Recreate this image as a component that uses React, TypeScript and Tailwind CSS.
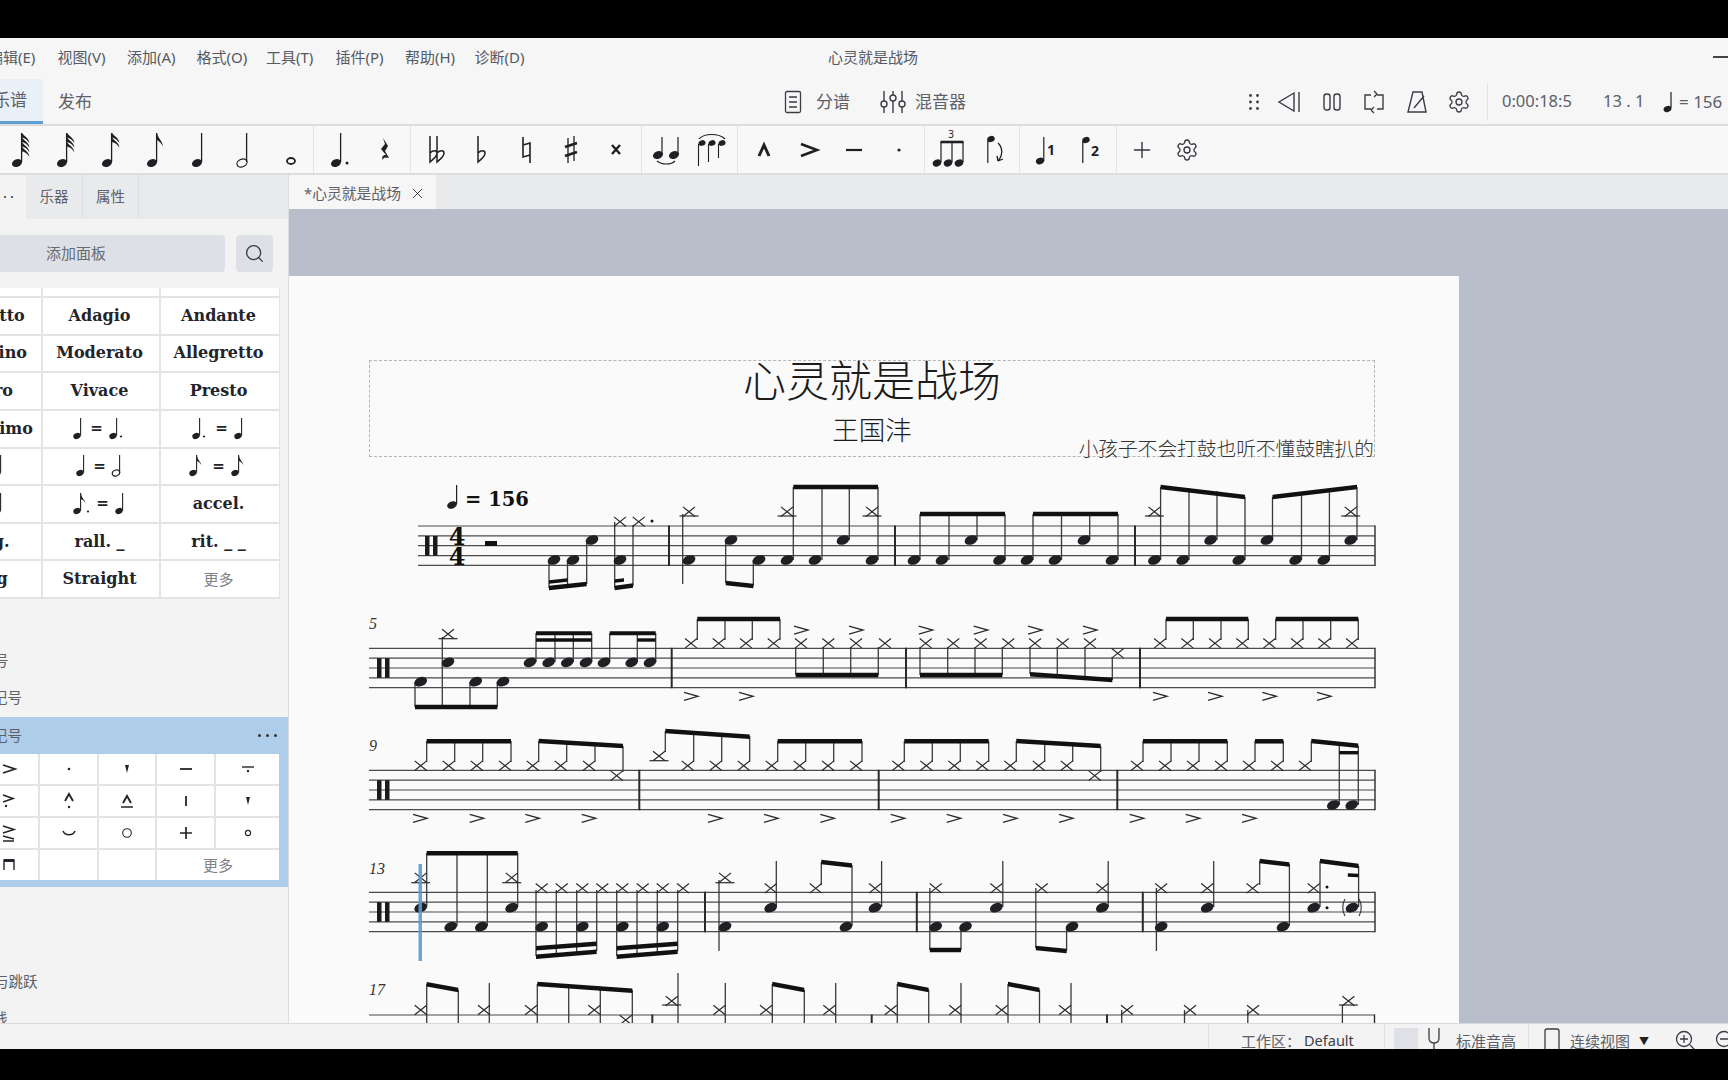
import type { ReactNode } from 'react'
import { Search, Settings, Plus, X } from 'lucide-react'

type Pt = [number, number]
type Beam = [number, number, number, number, number?]

const row = (xs: number[], y: number): Pt[] => xs.map((x) => [x, y])

/* ---------- small note drawings for toolbars and palettes ---------- */

function Head({ x, y, rx = 5.2, ry = 3.8, open = false }: { x: number; y: number; rx?: number; ry?: number; open?: boolean }) {
  return (
    <ellipse
      cx={x}
      cy={y}
      rx={rx}
      ry={ry}
      transform={`rotate(-22 ${x} ${y})`}
      fill={open ? 'none' : '#1f2024'}
      stroke={open ? '#1f2024' : 'none'}
      strokeWidth={open ? 1.2 : 0}
    />
  )
}

function NoteIcon({ flags = 0, open = false, dot = false }: { flags?: number; open?: boolean; dot?: boolean }) {
  return (
    <svg width="30" height="40" viewBox="0 0 30 40">
      <Head x={11} y={33} open={open} />
      <line x1="15.6" y1="3" x2="15.6" y2="32" stroke="#1f2024" strokeWidth="1.3" />
      {flags === 1 && <path d="M16 3c1 6 7 8 6 17c1-5-3-8-6-10z" fill="#1f2024" />}
      {flags > 1 &&
        Array.from({ length: flags }).map((_, i) => (
          <path key={i} d={`M16 ${3 + i * 4.6}c2 3 7 5 7.4 10c-2-3.5-4.6-4.6-7.4-5.6z`} fill="#1f2024" />
        ))}
      {dot && <circle cx="22" cy="33" r="1.5" fill="#1f2024" />}
    </svg>
  )
}

function Ico({ children, w = 30 }: { children: ReactNode; w?: number }) {
  return (
    <svg width={w} height="40" viewBox={`0 0 ${w} 40`} fill="none" stroke="#1f2024">
      {children}
    </svg>
  )
}

function Group({ w, children, last }: { w: string; children: ReactNode; last?: boolean }) {
  return (
    <div className={`flex h-full flex-none items-center justify-center ${w} ${last ? '' : 'border-r border-[#e4e4e5]'}`}>
      {children}
    </div>
  )
}

function Btn({ children }: { children: ReactNode }) {
  return <div className="flex h-full w-[45px] flex-none items-center justify-center">{children}</div>
}

function Toolbar() {
  return (
    <div className="flex h-[51px] flex-none border-y-2 border-[#dddddf] bg-[#f8f8f9]">
      <div className="-ml-[2px] flex h-full">
        <Group w="w-[316px]">
          <Btn><NoteIcon flags={4} /></Btn>
          <Btn><NoteIcon flags={3} /></Btn>
          <Btn><NoteIcon flags={2} /></Btn>
          <Btn><NoteIcon flags={1} /></Btn>
          <Btn><NoteIcon /></Btn>
          <Btn><NoteIcon open /></Btn>
          <Btn>
            <Ico>
              <ellipse cx="15" cy="31" rx="4" ry="3" strokeWidth="1.8" />
            </Ico>
          </Btn>
        </Group>
        <Group w="w-[97px]">
          <Btn><NoteIcon dot /></Btn>
          <Btn>
            <Ico>
              <path d="M13 8l5 8-3 5 4 7c-3-1-6-1-6 2-2-3 0-5 3-5l-5-6 4-5z" fill="#1f2024" stroke="none" />
            </Ico>
          </Btn>
        </Group>
        <Group w="w-[231px]">
          <Btn>
            <Ico>
              <path d="M9 6v26c3-3 7-5 7-9 0-3-4-3-7 0M16 6v26c3-3 7-5 7-9 0-3-4-3-7 0" strokeWidth="1.5" />
            </Ico>
          </Btn>
          <Btn>
            <Ico>
              <path d="M12 6v26c3-3 7-5 7-9 0-3-4-3-7 0" strokeWidth="1.5" />
            </Ico>
          </Btn>
          <Btn>
            <Ico>
              <path d="M12 7v20l7-2M19 33V13l-7 2" strokeWidth="1.6" />
            </Ico>
          </Btn>
          <Btn>
            <Ico>
              <path d="M12 8v25M18 6v25" strokeWidth="1.3" />
              <path d="M9 17l12-4M9 26l12-4" strokeWidth="2.6" />
            </Ico>
          </Btn>
          <Btn>
            <Ico>
              <path d="M11 15l8 9M19 15l-8 9" strokeWidth="2.4" />
            </Ico>
          </Btn>
        </Group>
        <Group w="w-[96px]">
          <Btn>
            <Ico w={36}>
              <Head x={9} y={25} />
              <Head x={25} y={25} />
              <path d="M13 7v18M29 7v18" strokeWidth="1.2" />
              <path d="M8 31c5 4 14 4 18 0" strokeWidth="1.1" />
            </Ico>
          </Btn>
          <Btn>
            <Ico w={36}>
              <Head x={8} y={13} rx={3.6} ry={2.8} />
              <Head x={18} y={13} rx={3.6} ry={2.8} />
              <Head x={28} y={13} rx={3.6} ry={2.8} />
              <path d="M4.5 14v22M14.5 14v18M24.5 14v14" strokeWidth="1.1" />
              <path d="M5 9c5-6 20-6 26 0" strokeWidth="1.1" />
            </Ico>
          </Btn>
        </Group>
        <Group w="w-[187px]">
          <Btn>
            <Ico>
              <path d="M10 26l5-11 5 11" strokeWidth="3" />
            </Ico>
          </Btn>
          <Btn>
            <Ico>
              <path d="M7 14l16 6-16 6" strokeWidth="2.6" />
            </Ico>
          </Btn>
          <Btn>
            <Ico>
              <path d="M7 20h16" strokeWidth="2.2" />
            </Ico>
          </Btn>
          <Btn>
            <Ico>
              <circle cx="15" cy="20" r="1.6" fill="#1f2024" stroke="none" />
            </Ico>
          </Btn>
        </Group>
        <Group w="w-[95px]">
          <Btn>
            <Ico w={36}>
              <text x="19" y="8" fontSize="10" textAnchor="middle" fill="#1f2024" stroke="none">3</text>
              <Head x={5} y={33} rx={4.4} ry={3.4} />
              <Head x={16} y={33} rx={4.4} ry={3.4} />
              <Head x={27} y={33} rx={4.4} ry={3.4} />
              <path d="M9 12v20M20 12v20M31 12v20" strokeWidth="1.2" />
              <path d="M8.5 12h23" strokeWidth="2.6" />
            </Ico>
          </Btn>
          <Btn>
            <Ico>
              <Head x={11} y={9} rx={3.8} ry={3} />
              <path d="M7.8 10v23" strokeWidth="1.2" />
              <path d="M18 13c5 5 5 12 0 18M18 31l-1-5M18 31l5-2" strokeWidth="1.3" />
            </Ico>
          </Btn>
        </Group>
        <Group w="w-[97px]">
          <Btn>
            <Ico>
              <Head x={9} y={31} rx={4.2} ry={3.2} />
              <path d="M12.8 7v24" strokeWidth="1.2" />
              <text x="20" y="25" fontSize="14" fontWeight="700" textAnchor="middle" fill="#1f2024" stroke="none">1</text>
            </Ico>
          </Btn>
          <Btn>
            <Ico>
              <Head x={10} y={10} rx={3.8} ry={3} />
              <path d="M6.8 11v22" strokeWidth="1.2" />
              <text x="19" y="26" fontSize="14" fontWeight="700" textAnchor="middle" fill="#1f2024" stroke="none">2</text>
            </Ico>
          </Btn>
        </Group>
        <Group w="w-[94px]" last>
          <Btn><Plus size={26} strokeWidth={1.3} className="text-[#33363d]" /></Btn>
          <Btn><Settings size={24} strokeWidth={1.3} className="text-[#33363d]" /></Btn>
        </Group>
      </div>
    </div>
  )
}

function TopRow() {
  return (
    <div className="flex h-[45px] flex-none items-center bg-[#f6f6f7] text-[17px] text-[#5c6068]">
      <div className="flex h-full w-[43px] flex-none items-center justify-end overflow-hidden border-b-[3px] border-[#5f9fd3] bg-[#e9f0f7] pr-[16px]">
        <span className="flex-none">乐谱</span>
      </div>
      <span className="ml-[15px] w-[34px] flex-none whitespace-nowrap">发布</span>

      <svg className="ml-[692px] flex-none" width="18" height="24" viewBox="0 0 18 24" fill="none" stroke="#3a3d44" strokeWidth="1.3">
        <rect x="1.5" y="1.5" width="15" height="21" rx="1.5" />
        <path d="M5 7h8M5 12h8M5 17h8" />
      </svg>
      <span className="ml-[14px] w-[34px] flex-none whitespace-nowrap">分谱</span>

      <svg className="ml-[30px] flex-none" width="26" height="24" viewBox="0 0 26 24" fill="none" stroke="#3a3d44" strokeWidth="1.4">
        <path d="M4 1v22M13 1v22M22 1v22" />
        <circle cx="4" cy="14" r="3" fill="#f6f6f7" />
        <circle cx="13" cy="8" r="3" fill="#f6f6f7" />
        <circle cx="22" cy="14" r="3" fill="#f6f6f7" />
      </svg>
      <span className="ml-[9px] w-[51px] flex-none whitespace-nowrap">混音器</span>

      <div className="ml-[282px] flex h-full flex-none items-center">
        <svg width="12" height="18" viewBox="0 0 12 18" fill="#3a3d44">
          <circle cx="2.5" cy="2.5" r="1.4" /><circle cx="9.5" cy="2.5" r="1.4" />
          <circle cx="2.5" cy="9" r="1.4" /><circle cx="9.5" cy="9" r="1.4" />
          <circle cx="2.5" cy="15.5" r="1.4" /><circle cx="9.5" cy="15.5" r="1.4" />
        </svg>
        <svg className="ml-[17px]" width="24" height="22" viewBox="0 0 24 22" fill="none" stroke="#3a3d44" strokeWidth="1.4">
          <path d="M17 2L2 11l15 9zM22 1v20" />
        </svg>
        <svg className="ml-[22px]" width="18" height="20" viewBox="0 0 18 20" fill="none" stroke="#3a3d44" strokeWidth="1.4">
          <rect x="1" y="2" width="6" height="16" rx="2.5" /><rect x="11" y="2" width="6" height="16" rx="2.5" />
        </svg>
        <svg className="ml-[22px]" width="22" height="24" viewBox="0 0 22 24" fill="none" stroke="#3a3d44" strokeWidth="1.4">
          <path d="M8 5H2v14h6M8 20l3 3M8 20l3-3M14 19h6V5h-6M14 4l-3 3M14 4l-3-3" />
        </svg>
        <svg className="ml-[21px]" width="22" height="24" viewBox="0 0 22 24" fill="none" stroke="#3a3d44" strokeWidth="1.4">
          <path d="M7 2h9l4 20H2zM8 18L18 6" />
        </svg>
        <Settings size={24} strokeWidth={1.3} className="ml-[19px] text-[#3a3d44]" />
      </div>
      <div className="ml-[16px] h-[38px] w-px flex-none bg-[#e2e2e3]" />
      <span className="ml-[14px] w-[71px] flex-none whitespace-nowrap text-[16.5px]">0:00:18:5</span>
      <span className="ml-[30px] w-[38px] flex-none whitespace-pre text-[16.5px]">13 . 1</span>
      <svg className="ml-[21px] flex-none" width="12" height="24" viewBox="0 0 12 24">
        <Head x={5.5} y={19} rx={4} ry={3} />
        <line x1="9" y1="2" x2="9" y2="18" stroke="#1f2024" strokeWidth="1.2" />
      </svg>
      <span className="ml-[5px] flex-none whitespace-pre">= 156</span>
    </div>
  )
}

function MenuBar() {
  const items = ['编辑(E)', '视图(V)', '添加(A)', '格式(O)', '工具(T)', '插件(P)', '帮助(H)', '诊断(D)']
  return (
    <div className="relative flex h-[41px] flex-none items-center bg-[#f6f6f7] pb-[2px] text-[15px] text-[#555962]">
      <div className="-ml-[12px] flex gap-[19.5px]">
        {items.map((m) => (
          <span key={m} className="w-[50px] flex-none whitespace-nowrap">{m}</span>
        ))}
      </div>
      <span className="absolute left-[828px]">心灵就是战场</span>
      <div className="absolute right-0 top-[18px] h-[2px] w-[15px] bg-[#444]" />
    </div>
  )
}

/* ---------- left palettes ---------- */

function Mini({ kind }: { kind: 'q' | 'qd' | 'h' | 'e' | 'ed' }) {
  const open = kind === 'h'
  const flag = kind === 'e' || kind === 'ed'
  const dot = kind === 'qd' || kind === 'ed'
  return (
    <svg width={dot || flag ? 19 : 13} height="24" viewBox={`0 0 ${dot || flag ? 19 : 13} 24`}>
      <Head x={5} y={19} rx={3.8} ry={2.9} open={open} />
      <line x1="8.6" y1="1" x2="8.6" y2="18.5" stroke="#22242a" strokeWidth="1.1" />
      {flag && <path d="M9 1c0 5 5 7 5 13 0-4-3-6-5-7z" fill="#22242a" />}
      {dot && <circle cx={kind === 'ed' ? 16 : 13} cy="19.5" r="1.1" fill="#22242a" />}
    </svg>
  )
}

function Eq({ a, b }: { a: 'q' | 'qd' | 'h' | 'e' | 'ed'; b: 'q' | 'qd' | 'h' | 'e' | 'ed' }) {
  return (
    <div className="flex items-center gap-[5px]">
      <Mini kind={a} />
      <span className="text-[15px] leading-none">=</span>
      <Mini kind={b} />
    </div>
  )
}

function Cell({ children }: { children?: ReactNode }) {
  return (
    <div className="flex items-center justify-center overflow-hidden bg-white pr-[3px] font-['DejaVu_Serif',serif] text-[16px] font-bold whitespace-nowrap text-[#22242a]">
      {children}
    </div>
  )
}

function TempoPalette() {
  return (
    <div className="mt-[16px] -ml-[77px] grid w-[357px] flex-none grid-cols-[118px_116px_118px] grid-rows-[8px_repeat(8,35.625px)] gap-[2px] border-r-2 border-b-2 border-[#e4e4e5] bg-[#e4e4e5]">
      <Cell /><Cell /><Cell />
      <Cell>Larghetto</Cell><Cell>Adagio</Cell><Cell>Andante</Cell>
      <Cell>Andantino</Cell><Cell>Moderato</Cell><Cell>Allegretto</Cell>
      <Cell>Allegro</Cell><Cell>Vivace</Cell><Cell>Presto</Cell>
      <Cell>Prestissimo</Cell><Cell><Eq a="q" b="qd" /></Cell><Cell><Eq a="qd" b="q" /></Cell>
      <Cell><Eq a="h" b="q" /></Cell><Cell><Eq a="q" b="h" /></Cell><Cell><Eq a="e" b="e" /></Cell>
      <Cell><Eq a="q" b="q" /></Cell><Cell><Eq a="ed" b="q" /></Cell><Cell>accel.</Cell>
      <Cell>allarg.</Cell><Cell>rall. _</Cell><Cell>rit. _ _</Cell>
      <Cell>Swing</Cell><Cell>Straight</Cell>
      <Cell><span className="font-['Noto_Sans_CJK_SC',sans-serif] text-[15px] font-normal text-[#808287]">更多</span></Cell>
    </div>
  )
}

function Art({ children }: { children?: ReactNode }) {
  return (
    <div className="flex items-center justify-center bg-white">
      <svg width="22" height="22" viewBox="0 0 22 22" fill="none" stroke="#23252b" strokeWidth="1.5">
        {children}
      </svg>
    </div>
  )
}

function ArticPalette() {
  const tri = <path d="M9 7l4 0-2 8z" fill="#23252b" stroke="none" />
  return (
    <div className="-ml-[20px] grid w-[299px] grid-cols-[58px_57px_56px_57px_63px] grid-rows-[repeat(4,30px)] gap-[2px] bg-[#e4e4e5]">
      <Art><path d="M5 7l12 4-12 4" strokeWidth="1.8" /></Art>
      <Art><circle cx="11" cy="11" r="1.3" fill="#23252b" stroke="none" /></Art>
      <Art>{tri}</Art>
      <Art><path d="M5 11h12" strokeWidth="1.8" /></Art>
      <Art><path d="M5 9h12" strokeWidth="1.4" /><circle cx="11" cy="13" r="1.2" fill="#23252b" stroke="none" /></Art>

      <Art><path d="M5 5l10 3.5L5 12" strokeWidth="1.6" /><circle cx="8" cy="16" r="1.2" fill="#23252b" stroke="none" /></Art>
      <Art><path d="M7 11l4-7 4 7" strokeWidth="1.9" /><circle cx="11" cy="17" r="1.2" fill="#23252b" stroke="none" /></Art>
      <Art><path d="M7 13l4-7 4 7" strokeWidth="1.9" /><path d="M5 17h12" /></Art>
      <Art><path d="M11 6v10" strokeWidth="1.8" /></Art>
      <Art>{tri}</Art>

      <Art><path d="M5 4l11 3.5L5 11M5 14l11 3M5 19h11" strokeWidth="1.5" /></Art>
      <Art><path d="M5 9c2 5 10 5 12 0" strokeWidth="1.6" /></Art>
      <Art><circle cx="11" cy="11" r="4.3" strokeWidth="1.1" /></Art>
      <Art><path d="M5 11h12M11 5v12" strokeWidth="1.7" /></Art>
      <Art><circle cx="11" cy="11" r="2.6" strokeWidth="1.1" /></Art>

      <Art><path d="M6 16V6h10v10" strokeWidth="1.4" /><path d="M6 6.5h10" strokeWidth="3" /></Art>
      <Art />
      <Art />
      <div className="col-span-2 flex items-center justify-center bg-white text-[15px] text-[#808287]">更多</div>
    </div>
  )
}

function Sidebar() {
  return (
    <aside className="flex h-full w-[289px] flex-none flex-col overflow-hidden border-r border-[#dcdcde] bg-[#f3f3f4] text-[14.5px] text-[#5c6068]">
      <div className="flex h-[44px] flex-none bg-[#e9eaec]">
        <div className="flex h-full w-[26px] flex-none items-center bg-[#f3f3f4] pl-[3px] tracking-[3px] text-[#333]">··</div>
        <div className="flex h-full w-[57px] flex-none items-center justify-center border-r border-[#dddee0]">乐器</div>
        <div className="flex h-full w-[56px] flex-none items-center justify-center border-r border-[#dddee0]">属性</div>
      </div>
      <div className="mt-[16px] flex flex-none gap-[11px]">
        <div className="-ml-[73px] flex h-[37px] w-[298px] flex-none items-center justify-center rounded bg-[#dde1e6] text-[15px] text-[#666a72]">添加面板</div>
        <div className="flex h-[37px] w-[37px] flex-none items-center justify-center rounded bg-[#dde1e6]">
          <Search size={21} strokeWidth={1.5} className="text-[#3a3d44]" />
        </div>
      </div>
      <TempoPalette />
      <div className="mt-[43px] -ml-[35px] flex h-[37px] flex-none items-center whitespace-nowrap">延音号</div>
      <div className="-ml-[36px] flex h-[37px] flex-none items-center whitespace-nowrap">临时记号</div>
      <div className="mt-[1px] h-[170px] flex-none bg-[#aecdeb]">
        <div className="relative -ml-[36px] flex h-[37px] items-center whitespace-nowrap">
          演奏记号
          <span className="absolute left-[294px] top-[17px] flex gap-[5px]">
            <i className="h-[3px] w-[3px] rounded-full bg-[#333]" />
            <i className="h-[3px] w-[3px] rounded-full bg-[#333]" />
            <i className="h-[3px] w-[3px] rounded-full bg-[#333]" />
          </span>
        </div>
        <ArticPalette />
      </div>
      <div className="mt-[76px] -ml-[35px] flex h-[37px] flex-none items-center whitespace-nowrap">反复与跳跃</div>
      <div className="-ml-[36px] flex h-[37px] flex-none items-center whitespace-nowrap">小节线</div>
    </aside>
  )
}

/* ---------- score ---------- */

type StaffData = {
  top: number
  left: number
  clef?: number
  bars: number[]
  heads: Pt[]
  xs: Pt[]
  stems: [number, number, number][]
  beams: Beam[]
  accents: Pt[]
  ledgers: [number, number][]
}

const kick1 = 560
const snare1 = 540
const staves: StaffData[] = [
  {
    top: 526,
    left: 418,
    bars: [669, 895, 1135, 1375],
    heads: [
      ...row([554, 573, 620, 689, 759, 787, 815, 872, 914, 942, 999.5, 1027, 1055, 1112, 1154.4, 1182.7, 1238.8, 1295.6, 1323.8], kick1),
      ...row([592, 731, 843, 971, 1084, 1210.6, 1267, 1350.7], snare1),
    ],
    xs: [...row([620, 638.7], 521.7), ...row([689, 787, 872, 1154.4, 1350.7], 511.7)],
    stems: [
      [549, 560, 588], [567.5, 560, 584], [586.7, 540, 584], [614.7, 522, 588], [633, 525, 586], [682.7, 514, 584],
      [725.7, 540, 583], [753.3, 560, 586], [793.3, 487, 560], [822, 487, 560], [849.3, 487, 540], [878, 487, 560],
      [920, 514, 560], [949, 514, 560], [977, 514, 540], [1005, 514, 560], [1033, 514, 560], [1061.5, 514, 560],
      [1089.7, 514, 540], [1118, 514, 560], [1160.6, 487, 560], [1189, 488, 560], [1217, 491, 540], [1245, 497, 560],
      [1272.5, 497, 540], [1301.5, 494, 560], [1329.4, 491, 560], [1357, 487, 540],
    ],
    beams: [
      [549, 588, 586.7, 584], [549, 582, 567.5, 580, 3.4], [614.7, 588, 633, 585.5], [614.7, 581, 624, 580, 3.4],
      [725.7, 583, 753.3, 586], [793.3, 487, 878, 487], [920, 514, 1005, 514], [1033, 514, 1118, 514],
      [1160.6, 487, 1245, 497], [1272.5, 497, 1357, 487],
    ],
    accents: [],
    ledgers: [[689, 516], [787, 516], [872, 516], [1154.4, 516], [1350.7, 516]],
  },
  {
    top: 648.3,
    left: 369,
    clef: 377,
    bars: [671.7, 906, 1140, 1375],
    heads: [
      ...row([420.7, 475.7, 503], 681.7),
      ...row([448, 530, 548.7, 567.3, 586, 604, 631.7, 650], 662.3),
    ],
    xs: [
      [448, 634],
      ...row([691, 718.7, 746, 773.7, 801, 828.3, 856, 885, 925.7, 953.3, 980.7, 1008.3, 1035, 1062.7, 1090, 1160, 1187.3, 1215, 1242.3, 1269.3, 1297, 1324.3, 1352], 643.3),
      [1117.7, 653.3],
    ],
    stems: [
      [415, 682, 707], [442.3, 637, 707], [470, 682, 707], [497.3, 682, 707],
      [536, 633, 662], [555, 633, 662], [573.3, 633, 662], [591.7, 633, 662], [609.7, 633, 662], [637.3, 633, 662], [655.7, 633, 662],
      [697.3, 619, 640], [725, 619, 640], [752.3, 619, 640], [780, 619, 640],
      [795.7, 647, 675], [823.3, 647, 675], [850.7, 647, 675], [878.3, 647, 675],
      [920, 647, 675], [947.7, 647, 675], [975, 647, 675], [1002.3, 647, 675],
      [1030, 647, 674], [1057.3, 647, 676], [1085, 647, 678], [1112.3, 657, 680],
      [1166, 619, 640], [1193.3, 619, 640], [1221, 619, 640], [1248.3, 619, 640],
      [1275.7, 619, 640], [1303, 619, 640], [1330.7, 619, 640], [1358.3, 619, 640],
    ],
    beams: [
      [415, 707, 497.3, 707], [536, 633.3, 591.7, 633.3, 4], [536, 640, 591.7, 640, 3.4], [609.7, 633.3, 655.7, 633.3, 4],
      [637.3, 640, 655.7, 640, 3.4], [697.3, 619, 780, 619], [795.7, 675, 878.3, 675], [920, 675, 1002.3, 675],
      [1030, 674.3, 1112.3, 680], [1166, 619, 1248.3, 619], [1275.7, 619, 1358.3, 619],
    ],
    accents: [
      ...row([691, 746, 1160, 1215, 1269.3, 1324], 696.3),
      ...row([801, 856, 925.7, 980.7, 1035, 1090], 630),
    ],
    ledgers: [[448, 638.7]],
  },
  {
    top: 770.3,
    left: 369,
    clef: 377,
    bars: [639.3, 878.7, 1117.3, 1375],
    heads: row([1333.3, 1351.7], 805),
    xs: [
      [659, 756],
      ...row([420.7, 448.7, 476.7, 505, 532.7, 560.7, 589, 687.7, 715.7, 743.7, 771.7, 799.7, 828, 856, 898.3, 926.3, 954.3, 982.3, 1010.3, 1038.7, 1066.7, 1137, 1165, 1193, 1221, 1249, 1277, 1305], 765.7),
      [616.7, 775.7],
      [1094.7, 775.7],
    ],
    stems: [
      [426.7, 741, 762], [454.7, 741, 762], [482.7, 741, 762], [511, 741, 762],
      [538.7, 741, 762], [566.7, 742, 762], [595, 744, 762], [623, 746, 772],
      [665.3, 731, 752], [693.7, 733, 762], [721.7, 734, 762], [749.7, 736, 762],
      [777.7, 741, 762], [805.7, 741, 762], [833.7, 741, 762], [862, 741, 762],
      [904.3, 741, 762], [932.3, 741, 762], [960.3, 741, 762], [988.7, 741, 762],
      [1016.3, 741, 762], [1044.7, 742, 762], [1072.7, 744, 762], [1100.7, 746, 772],
      [1143, 741, 762], [1171, 741, 762], [1199, 741, 762], [1227.3, 741, 762],
      [1255, 741, 762], [1283.3, 741, 762], [1311.3, 741, 762], [1339.3, 744, 805], [1358.3, 746, 805],
    ],
    beams: [
      [426.7, 741.3, 511, 741.3], [538.7, 741, 623, 746], [665.3, 731, 749.7, 736.7], [777.7, 741.3, 862, 741.3],
      [904.3, 741.3, 988.7, 741.3], [1016.3, 741, 1100.7, 746], [1143, 741.3, 1227.3, 741.3], [1255, 741.3, 1283.3, 741.3],
      [1311.3, 741, 1358.3, 745.7], [1339.3, 752.7, 1358.3, 752.7, 3.4],
    ],
    accents: row([420, 476.7, 532.3, 588.7, 715, 771, 827.3, 897.7, 953.7, 1010, 1066, 1136.7, 1192.7, 1249], 818.3),
    ledgers: [[659, 760.7]],
  },
  {
    top: 892.3,
    left: 369,
    clef: 377,
    bars: [705, 916.8, 1142.8, 1375],
    heads: [
      ...row([450.7, 481.3, 541.7, 582.3, 622.3, 662.7, 725, 846, 935.7, 965.5, 1072, 1161.2, 1283], 926.7),
      ...row([420.7, 511.7, 770.7, 875, 996.3, 1102.3, 1207.2, 1313.7, 1352], 907.7),
    ],
    xs: [
      ...row([420.7, 511.7, 725], 877.7),
      ...row([541.7, 561.7, 582.3, 602.3, 622.3, 642.7, 662.7, 683, 770.7, 815.7, 875, 935.7, 996.3, 1041.7, 1102.3, 1161.2, 1207.2, 1252.6, 1313.7], 888.3),
    ],
    stems: [
      [426.7, 853, 907], [457, 853, 926], [487.3, 853, 926], [517.7, 853, 907],
      [536, 890, 956], [556.3, 890, 955], [576.7, 890, 953], [596.7, 890, 951],
      [616.7, 890, 956], [637, 890, 955], [657.3, 890, 953], [677.7, 890, 951],
      [719, 880, 951], [776.3, 861, 907], [821.3, 862, 885], [852, 865, 926], [881.6, 861, 907],
      [929.8, 888, 950], [961, 928, 950], [1002.8, 861, 907], [1035.8, 888, 948], [1066.6, 928, 951], [1108.2, 861, 907],
      [1156.4, 888, 951], [1213.7, 861, 907], [1259.7, 861, 885], [1289.4, 864, 926], [1320, 861, 907], [1358.6, 866, 907],
    ],
    beams: [
      [426.7, 853.3, 517.7, 853.3], [536, 956.7, 596.7, 951.7], [536, 948.3, 596.7, 943.7], [616.7, 956.7, 677.7, 951.7],
      [616.7, 948.3, 677.7, 943.7], [821.3, 862, 852, 865.5], [929.8, 950, 961, 950], [1035.8, 948, 1066.6, 951],
      [1259.7, 861, 1289.4, 864.5], [1320, 861, 1358.6, 866], [1347.8, 875, 1358.6, 875.5, 3.6],
    ],
    accents: [],
    ledgers: [[420.7, 882.7], [511.7, 882.7], [725, 882.7]],
  },
  {
    top: 1015,
    left: 369,
    bars: [652.3, 871.7, 1107, 1374.5],
    heads: [],
    xs: [
      ...row([420.7, 484, 531, 594.3, 719.3, 766, 829.3, 890.8, 955.2, 1001.7, 1065, 1127, 1190, 1253], 1010),
      [625.7, 1020],
      [671.7, 1001],
      [1348.4, 1001],
    ],
    stems: [
      [426.7, 984, 1023], [458.3, 990, 1023], [489.3, 983, 1023], [537.3, 984, 1023], [568.7, 986, 1023], [600.3, 988, 1023], [632.3, 990, 1023],
      [678, 973, 1023], [725.3, 983, 1023], [772.3, 984, 1023], [804.3, 990, 1023], [835.7, 983, 1023],
      [897.3, 984, 1023], [928.7, 990, 1023], [961, 983, 1023], [1008, 984, 1023], [1039.5, 990, 1023], [1071, 983, 1023],
      [1121.7, 1010, 1023], [1184.5, 1010, 1023], [1247.8, 1010, 1023], [1342.4, 1005, 1023],
    ],
    beams: [
      [426.7, 984.3, 458.3, 990], [537.3, 984, 632.3, 990.7], [772.3, 984, 804.3, 990], [897.3, 984, 928.7, 990], [1008, 984, 1039.5, 990],
    ],
    accents: [],
    ledgers: [[671.7, 1005], [1348.4, 1005]],
  },
]

function Staff({ data }: { data: StaffData }) {
  const { top, left, clef, bars, heads, xs, stems, beams, accents, ledgers } = data
  const gap = 9.85
  return (
    <g>
      {[0, 1, 2, 3, 4].map((i) => (
        <line key={i} x1={left} x2={1375} y1={top + i * gap} y2={top + i * gap} stroke="#4b4b4b" strokeWidth="1.2" />
      ))}
      {bars.map((x, i) => (
        <line key={x} x1={x} x2={x} y1={top - 0.5} y2={top + 4 * gap + 0.5} stroke="#2a2a2a" strokeWidth={i === bars.length - 1 ? 1.4 : 2} />
      ))}
      {clef !== undefined && (
        <g fill="#1a1a1a">
          <rect x={clef} y={top + gap} width="4.5" height={2 * gap} />
          <rect x={clef + 8} y={top + gap} width="4.5" height={2 * gap} />
        </g>
      )}
      {stems.map(([x, a, b], i) => (
        <line key={i} x1={x} x2={x} y1={a} y2={b} stroke="#3a3a3a" strokeWidth="1.3" />
      ))}
      {beams.map(([x1, y1, x2, y2, t = 4.5], i) => (
        <polygon key={i} points={`${x1},${y1 - t / 2} ${x2},${y2 - t / 2} ${x2},${y2 + t / 2} ${x1},${y1 + t / 2}`} fill="#111" />
      ))}
      {heads.map(([x, y], i) => (
        <Head key={i} x={x} y={y} rx={6.6} ry={4.5} />
      ))}
      {xs.map(([x, y], i) => (
        <path key={i} d={`M${x - 6} ${y - 4.8}L${x + 6} ${y + 4.8}M${x + 6} ${y - 4.8}L${x - 6} ${y + 4.8}`} stroke="#2a2a2a" strokeWidth="1.2" />
      ))}
      {ledgers.map(([x, y], i) => (
        <line key={i} x1={x - 9.5} x2={x + 9.5} y1={y} y2={y} stroke="#2a2a2a" strokeWidth="1.2" />
      ))}
      {accents.map(([x, y], i) => (
        <path key={i} d={`M${x - 7} ${y - 4}L${x + 7} ${y}L${x - 7} ${y + 4}`} fill="none" stroke="#2a2a2a" strokeWidth="1.3" />
      ))}
    </g>
  )
}

function Score() {
  const serif = "'DejaVu Serif', serif"
  return (
    <svg className="block" width="1170" height="566" viewBox="289 457 1170 566">
      {staves.map((s) => (
        <Staff key={s.top} data={s} />
      ))}

      {/* first staff extras */}
      <rect x="425" y="536" width="4.5" height="19.7" fill="#1a1a1a" />
      <rect x="433" y="536" width="4.5" height="19.7" fill="#1a1a1a" />
      <text x="457" y="545" fontSize="24" fontWeight="700" textAnchor="middle" fontFamily={serif} fill="#111">4</text>
      <text x="457" y="565" fontSize="24" fontWeight="700" textAnchor="middle" fontFamily={serif} fill="#111">4</text>
      <rect x="485" y="541" width="12" height="5" fill="#111" />
      <circle cx="652" cy="521" r="1.5" fill="#111" />
      <Head x={452} y={505} rx={5} ry={3.6} />
      <line x1="456.6" x2="456.6" y1="485" y2="504" stroke="#222" strokeWidth="1.2" />
      <text x="465" y="506" fontSize="19.5" fontWeight="700" fontFamily={serif} fill="#111">= 156</text>

      {/* measure numbers */}
      <text x="369" y="629" fontSize="16" fontStyle="italic" fontFamily="'Liberation Serif', serif" fill="#333">5</text>
      <text x="369" y="751" fontSize="16" fontStyle="italic" fontFamily="'Liberation Serif', serif" fill="#333">9</text>
      <text x="369" y="874" fontSize="16" fontStyle="italic" fontFamily="'Liberation Serif', serif" fill="#333">13</text>
      <text x="369" y="995" fontSize="16" fontStyle="italic" fontFamily="'Liberation Serif', serif" fill="#333">17</text>

      {/* dotted note and ghost note in bar 16 */}
      <circle cx="1327" cy="887" r="1.5" fill="#111" />
      <circle cx="1327" cy="907.7" r="1.5" fill="#111" />
      <path d="M1345 899c-3 5-3 12 0 17M1359 899c3 5 3 12 0 17" fill="none" stroke="#333" strokeWidth="1.1" />

      {/* playback cursor */}
      <rect x="418.5" y="864" width="3.5" height="97" fill="#5a9bd0" opacity="0.9" />
    </svg>
  )
}

function ScorePage() {
  return (
    <div className="w-[1170px] flex-none overflow-hidden bg-[#fafafa] pt-[84px]">
      <div className="relative ml-[80px] flex h-[97px] w-[1006px] flex-col items-center border border-dashed border-[#b5b5b5] text-[#1c1c1c]">
        <span className="-mt-[2px] text-[43px] leading-none font-light">心灵就是战场</span>
        <span className="mt-[15px] text-[26.5px] leading-none font-light">王国沣</span>
        <span className="absolute right-0 -bottom-[3px] text-[19.7px] leading-none font-light text-[#333]">小孩子不会打鼓也听不懂鼓瞎扒的</span>
      </div>
      <Score />
    </div>
  )
}

function StatusBar() {
  return (
    <div className="flex h-[38px] flex-none items-center border-t border-[#d9d9db] bg-[#f3f3f4] pb-[3px] pl-[1208px] text-[15px] text-[#5c6068]">
      <div className="flex h-full flex-none items-center border-l border-[#e0e0e2] pl-[32px]">
        <span className="w-[63px] whitespace-nowrap">工作区：</span>
        <span className="w-[48px] text-[14.5px] text-[#3e4148]">Default</span>
      </div>
      <div className="ml-[32px] flex h-full flex-none items-center border-l border-[#e0e0e2] pl-[9px]">
        <div className="mt-[7px] h-full w-[24px] bg-[#dfe1e6]" />
        <svg className="ml-[10px]" width="12" height="28" viewBox="0 0 12 28" fill="none" stroke="#3a3d44" strokeWidth="1.3">
          <path d="M1 1v10c0 3 2 5 5 5s5-2 5-5V1M6 16v12" />
        </svg>
        <span className="ml-[16px] w-[60px] whitespace-nowrap">标准音高</span>
      </div>
      <div className="ml-[12px] flex h-full flex-none items-center border-l border-[#e0e0e2] pl-[15px]">
        <svg width="16" height="30" viewBox="0 0 16 30" fill="none" stroke="#3a3d44" strokeWidth="1.3">
          <rect x="1" y="3" width="14" height="26" rx="2" />
          <path d="M5 23l3 3 3-3" />
        </svg>
        <span className="ml-[10px] w-[60px] whitespace-nowrap">连续视图</span>
        <span className="ml-[9px] text-[10px] text-[#222]">▼</span>
        <svg className="ml-[25px]" width="24" height="24" viewBox="0 0 24 24" fill="none" stroke="#3a3d44" strokeWidth="1.3">
          <circle cx="10" cy="10" r="7.5" /><path d="M10 6v8M6 10h8M16 16l6 6" />
        </svg>
        <svg className="ml-[16px]" width="24" height="24" viewBox="0 0 24 24" fill="none" stroke="#3a3d44" strokeWidth="1.3">
          <circle cx="10" cy="10" r="7.5" /><path d="M6 10h8M16 16l6 6" />
        </svg>
      </div>
    </div>
  )
}

function DocTabs() {
  return (
    <div className="flex h-[34px] flex-none bg-[#e9eaec]">
      <div className="flex h-full w-[147px] flex-none items-center bg-[#f6f6f7] pt-[2px] pl-[15px] text-[14.8px] text-[#5c6068]">
        <span className="w-[100px] flex-none whitespace-nowrap">*心灵就是战场</span>
        <X size={17} strokeWidth={1.3} className="ml-[5px] text-[#333]" />
      </div>
    </div>
  )
}

export default function App() {
  return (
    <div className="flex h-screen w-[1728px] flex-col overflow-hidden bg-black font-['Noto_Sans','Noto_Sans_CJK_SC',sans-serif]">
      <div className="h-[38px] flex-none" />
      <div className="flex h-[1011px] flex-none flex-col overflow-hidden bg-[#f6f6f7]">
        <MenuBar />
        <TopRow />
        <Toolbar />
        <main className="flex h-[848px] flex-none overflow-hidden">
          <Sidebar />
          <section className="flex min-w-0 flex-1 flex-col overflow-hidden">
            <DocTabs />
            <div className="flex flex-1 overflow-hidden bg-[#b9bfca] pt-[67px]">
              <ScorePage />
            </div>
          </section>
        </main>
        <StatusBar />
      </div>
    </div>
  )
}
